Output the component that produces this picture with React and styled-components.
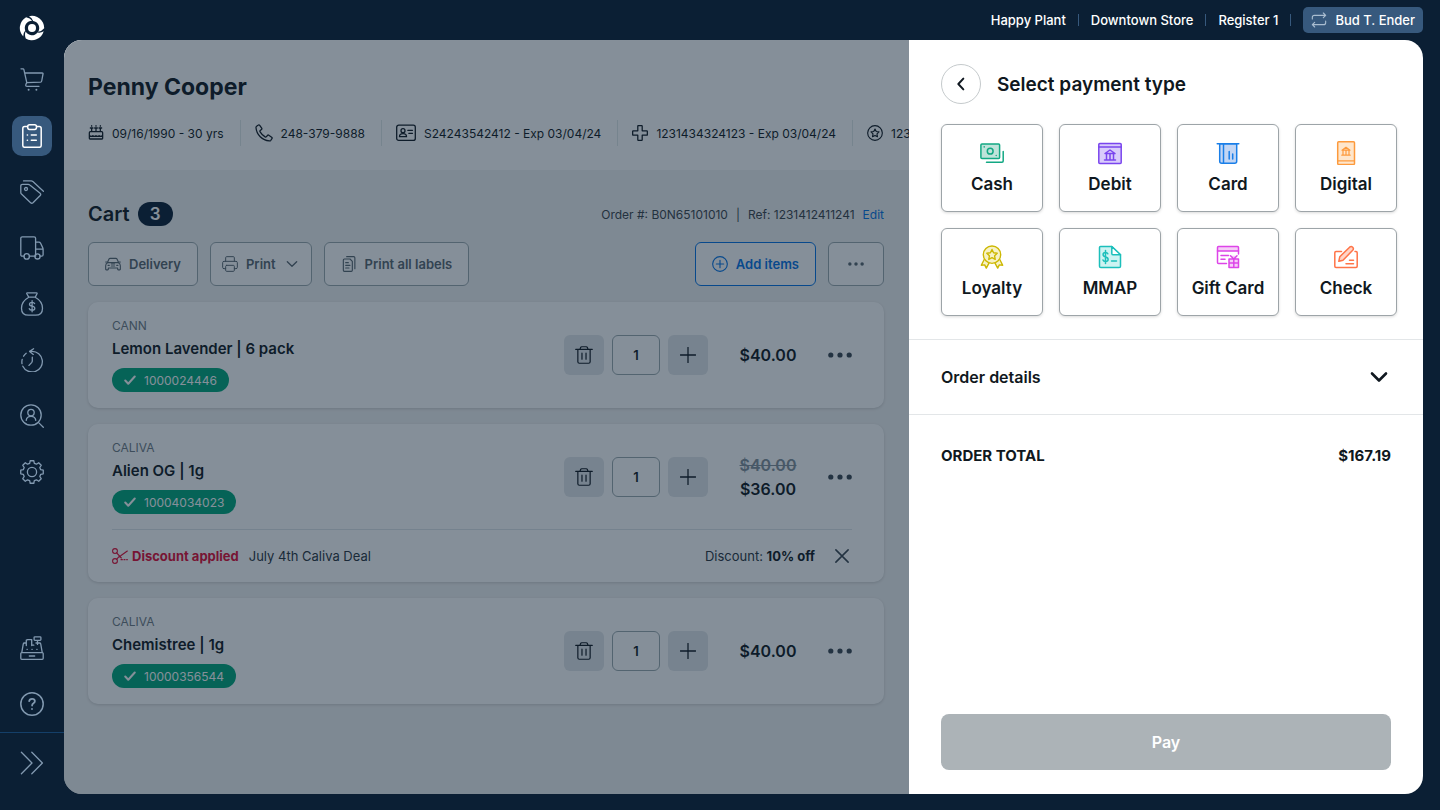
import styled, { createGlobalStyle } from "styled-components";

const GlobalStyle = createGlobalStyle`
  * {
    box-sizing: border-box;
  }
  body {
    margin: 0;
    background: #0b1f34;
    color: #101820;
    font-family: Inter, "Liberation Sans", sans-serif;
    font-size: 13px;
  }
  button, input {
    font: inherit;
    color: inherit;
    margin: 0;
  }
  button {
    cursor: pointer;
  }
  h1, h2, h3, p, ul {
    margin: 0;
    padding: 0;
  }
`;

function Icon({ size = 24, width = 1.3, children }) {
  return (
    <svg
      width={size}
      height={size}
      viewBox="0 0 24 24"
      fill="none"
      stroke="currentColor"
      strokeWidth={width}
      strokeLinecap="round"
      strokeLinejoin="round"
      aria-hidden="true"
    >
      {children}
    </svg>
  );
}

// sidebar icons

const blade = "M-3 -11.8A12.2 12.2 0 0 1 12.2 .2Q9.6 3.4 6.2 3.7A7.2 7.2 0 0 0 1.2 -7.1Q0 -10.3 -3 -11.8Z";

const Logo = () => (
  <svg width="26" height="26" viewBox="-13 -13 26 26" fill="#fff" aria-hidden="true">
    <path d={blade} />
    <path d={blade} transform="rotate(120)" />
    <path d={blade} transform="rotate(240)" />
    <circle r="4" />
  </svg>
);

const CartIcon = () => (
  <Icon>
    <path d="M1 .8h2q.7 0 .9.8l2.9 13M4.5 5h17.7q1 0 .8 1l-1.3 7q-.2 1-1.2 1.1L6.8 14.6l-.9 1.8q-.7 1.9 1.3 1.9H19" />
    <circle cx="8.6" cy="21.8" r="1" fill="currentColor" stroke="none" />
    <circle cx="16.4" cy="21.8" r="1" fill="currentColor" stroke="none" />
  </Icon>
);

const ClipboardIcon = () => (
  <Icon width={1.5}>
    <path d="M7.5 2.6H4.7q-1.9 0-1.9 1.9v17q0 1.8 1.9 1.8h14.6q1.9 0 1.9-1.8v-17q0-1.9-1.9-1.9h-2.8" />
    <rect x="7.7" y=".8" width="8.8" height="4.6" rx="1.8" />
    <path d="M7.3 11h.2M11.3 11h5M7.3 16.3h.2M11.3 16.3h5" />
  </Icon>
);

const TagsIcon = () => (
  <Icon>
    <path d="M.8 6q0-1.7 1.7-1.7h5.7q.9 0 1.6.6l10.3 8.3q1.2 1.1.1 2.3l-7.2 7.2q-1.2 1.1-2.4 0L1.5 14Q.8 13.4.8 12.4z" />
    <path d="M3.5.9h7.7q1 0 1.7.7L23.4 11.2" />
    <circle cx="6" cy="9" r="1.5" />
  </Icon>
);

const TruckIcon = () => (
  <Icon>
    <path d="M4 20.2H2.3Q.8 20.2.8 18.7V2.2Q.8.8 2.3.8h11.8q1.5 0 1.5 1.4v18H9.4M15.6 6.2h3.2q1.3 0 1.8 1.1l2.2 4.6q.3.7.3 1.5v5.3q0 1.5-1.5 1.5H20M15.6 13.2H23" />
    <circle cx="6.7" cy="20.4" r="2.7" />
    <circle cx="17.5" cy="20.4" r="2.6" />
  </Icon>
);

const MoneyBagIcon = () => (
  <Icon>
    <path d="M7.3.8h9.2q.9 0 .5.9L15.4 4.9M7.3.8q-.9 0-.5.9L8.6 4.9M8.4 5.2h7.2M8.8 5.3C4.5 7.7 1.5 12.2 1.5 16.2C1.5 20.8 4.5 23.2 8.5 23.2h7C19.5 23.2 22.5 20.8 22.5 16.2C22.5 12.2 19.5 7.7 15.2 5.3" />
    <path d="M14.6 11.6q-.5-1.3-2.5-1.3q-2.6 0-2.6 1.9q0 1.5 2.6 1.9t2.7 2.1q0 2-2.7 2q-2.3 0-2.8-1.5M12.1 8.6v11.2" />
  </Icon>
);

const HistoryIcon = () => (
  <Icon>
    <path d="M9.6 3.4h2.4a10.3 10.3 0 1 1-9.2 14.8M2 15.6a10.3 10.3 0 0 1 .2-4.3M3.6 8.2a10.3 10.3 0 0 1 2.6-2.9M13.6.8 9.6 3.4l3.7 3M12.3 9.2v3.6q0 1-.7 1.8L9 17.4" />
  </Icon>
);

const CustomerIcon = () => (
  <Icon>
    <circle cx="11" cy="11" r="10.2" />
    <path d="m18.6 18.6 4.7 4.7M6.2 16.3q.5-4 4.8-4t4.8 4" />
    <circle cx="11" cy="8.6" r="3.2" />
  </Icon>
);

// eight teeth, four points each
const gearPoints = Array.from({ length: 32 }, (_, i) => {
  const tooth = Math.floor(i / 4) * 45;
  const angle = ((tooth + [-15, -9, 9, 15][i % 4]) * Math.PI) / 180;
  const radius = i % 4 === 1 || i % 4 === 2 ? 11.4 : 9;
  return `${12 + radius * Math.sin(angle)},${12 - radius * Math.cos(angle)}`;
}).join(" ");

const GearIcon = () => (
  <Icon>
    <polygon points={gearPoints} />
    <circle cx="12" cy="12" r="4.6" />
  </Icon>
);

const RegisterIcon = () => (
  <Icon>
    <rect x=".8" y="16.6" width="22.4" height="6.7" rx="1" />
    <path d="M9.3 20h5.4M1.8 16.4 3.3 7.8Q3.5 7 4.3 7h2M11.8 9.2h2M16 7h3.7q.8 0 1 .8l1.5 8.6M6.3 9.6V4.2l1.4-.6 4 0v6M17.5 4.4v4M14.9.8h5.2q.8 0 .8.8v2q0 .8-.8.8h-5.2q-.8 0-.8-.8v-2q0-.8.8-.8zM7 13.3h.3M11.9 13.3h.3M16.8 13.3h.3" />
  </Icon>
);

const HelpIcon = () => (
  <Icon width={1.5}>
    <circle cx="12" cy="12" r="11.2" />
    <path strokeWidth="1.8" d="M9.2 9.2q.3-2.3 2.9-2.3t2.8 2.2q0 1.4-1.4 2.2t-1.4 2.3M12 16.9v.1" />
  </Icon>
);

const ExpandIcon = () => (
  <Icon>
    <path d="M1.4 1.3 12 12 1.4 22.7M11.8 1.3 22.4 12 11.8 22.7" />
  </Icon>
);

// customer details

const CakeIcon = () => (
  <Icon size={16} width={1.9}>
    <path d="M2 20V11.5q0-1.5 1.5-1.5h17q1.5 0 1.5 1.5V20q0 1-1 1H3q-1 0-1-1zM2.5 16q2.4 2 4.8 0 2.4 2 4.7 0 2.4 2 4.7 0 2.4 2 4.8 0M5.5 10V4.5M12 10V4.5M18.5 10V4.5M5.5 1v.8M12 1v.8M18.5 1v.8M3.5 4.5h4M10 4.5h4M16.5 4.5h4" />
  </Icon>
);

const PhoneIcon = () => (
  <Icon size={18} width={1.7}>
    <path d="M2.2 2.9 4.5 1.4q1-.7 1.8.4l2.6 3.8q.7 1-.3 1.8L7 8.8q-.8.7-.2 1.6 2.4 4 6.7 6.8 1 .6 1.7-.3l1.4-1.6q.8-1 1.8-.3l3.8 2.6q1.1.8.4 1.8l-1.5 2.3q-.7 1-2 .9C9.8 22 2 14.5 1.3 4.7q0-1.2.9-1.8z" />
  </Icon>
);

const IdIcon = () => (
  <svg width="20" height="18" viewBox="0 0 20 18" fill="none" stroke="currentColor" strokeWidth="1.3" strokeLinecap="round" aria-hidden="true">
    <rect x=".7" y="1.2" width="18.6" height="15.2" rx="2" />
    <circle cx="7" cy="6.7" r="2" />
    <path d="M3.5 12.7q0-3 3.5-3t3.5 3zM11.8 6.3h4.7M12.8 9.3h3.7" />
  </svg>
);

const CrossIcon = () => (
  <Icon size={16} width={1.9}>
    <path d="M9.5 1h5q.8 0 .8.8v6.9h6.9q.8 0 .8.8v5q0 .8-.8.8h-6.9v6.9q0 .8-.8.8h-5q-.8 0-.8-.8v-6.9H1.8q-.8 0-.8-.8v-5q0-.8.8-.8h6.9V1.8q0-.8.8-.8z" />
  </Icon>
);

const StarBadgeIcon = () => (
  <Icon size={16} width={1.7}>
    <circle cx="12" cy="12" r="11" />
    <path d="m12 6 1.9 3.8 4.1.6-3 3 .7 4.2-3.7-2-3.7 2 .7-4.2-3-3 4.1-.6z" />
  </Icon>
);

// cart icons

const CarIcon = () => (
  <Icon size={16} width={1.7}>
    <path d="M3.5 10 6 4.5Q6.5 3.5 7.7 3.5h8.6q1.2 0 1.7 1L20.5 10M1 9h2M21 9h2M4 10h16q3 1 3 4.5V20q0 .8-.8.8h-2.4q-.8 0-.8-.8v-2H5v2q0 .8-.8.8H1.8Q1 20.8 1 20v-5.5Q1 11 4 10zM4.5 14h2M17.5 14h2M9.5 15h5M9.5 12h5" />
  </Icon>
);

const PrinterIcon = () => (
  <Icon size={16} width={1.5}>
    <path d="M5.5 8V2.5Q5.5 1 7 1h10q1.5 0 1.5 1.5V8M5.5 19H3q-2 0-2-2v-7q0-2 2-2h18q2 0 2 2v7q0 2-2 2h-2.5M7 14h10q1.5 0 1.5 1.5v6q0 1.5-1.5 1.5H7q-1.5 0-1.5-1.5v-6Q5.5 14 7 14z" />
  </Icon>
);

const PagesIcon = () => (
  <Icon size={16} width={1.7}>
    <path d="M5 4.5h8.5l3.5 3.5v13.5q0 1.5-1.5 1.5H5q-1.5 0-1.5-1.5V6Q3.5 4.5 5 4.5zM8.5 1H19q1.8 0 1.8 1.8V19M7 10h4M7 14h6.500M7 18h5" />
  </Icon>
);

const AddIcon = () => (
  <Icon size={16} width={1.7}>
    <circle cx="12" cy="12" r="11" />
    <path d="M12 6.5v11M6.5 12h11" />
  </Icon>
);

const ChevronIcon = ({ size, width }) => (
  <Icon size={size} width={width}>
    <path d="m5 8.5 7 7 7-7" />
  </Icon>
);

const DotsIcon = ({ size }) => (
  <Icon size={size}>
    <g fill="currentColor" stroke="none">
      <circle cx="2.8" cy="12" r="2.6" />
      <circle cx="12" cy="12" r="2.6" />
      <circle cx="21.2" cy="12" r="2.6" />
    </g>
  </Icon>
);

const TrashIcon = () => (
  <Icon size={18} width={1.6}>
    <path d="M1 4.5h22M6.5 4.5l1-2.5q.4-1 1.5-1h6q1.1 0 1.5 1l1 2.5M3.8 5v16q0 2 2 2h12.4q2 0 2-2V5M9.3 9.5v8M14.7 9.5v8" />
  </Icon>
);

const PlusIcon = () => (
  <Icon size={16} width={1.9}>
    <path d="M12 .5v23M.5 12h23" />
  </Icon>
);

const CloseIcon = () => (
  <Icon size={14} width={2.6}>
    <path d="m1.5 1.5 21 21M22.5 1.5l-21 21" />
  </Icon>
);

const CheckMark = () => (
  <Icon size={12} width={4}>
    <path d="m2.5 13 6 6.5L21.5 5" />
  </Icon>
);

const ScissorsIcon = () => (
  <Icon size={16} width={1.7}>
    <circle cx="4.5" cy="4.5" r="3.6" />
    <circle cx="4.5" cy="19.5" r="3.6" />
    <path d="M7 7.2 14 15M7 16.8Q10 12.5 13 11.5L23 4.5M13.5 17.5h2M18 17.5h1.5M22 17.5h1" />
  </Icon>
);

const SwapIcon = () => (
  <Icon size={16} width={1.7}>
    <path d="M2 10.5V8q0-3 3-3h17M18.5 1.5 22 5l-3.5 3.5M22 13.5V16q0 3-3 3H2M5.5 15.5 2 19l3.5 3.5" />
  </Icon>
);

// payment type icons, "fill" is the pale tint of each one

const CashArt = ({ fill }) => (
  <Icon width={1.5}>
    <rect x=".9" y="2.9" width="18.7" height="14.7" rx="1" fill={fill} />
    <circle cx="10.2" cy="10.2" r="2.9" />
    <path d="M4.2 5.8v.1M16.2 14.5v.1M23.2 10.5V20q0 1.2-1.2 1.2H6.5" />
  </Icon>
);

const DebitArt = ({ fill }) => (
  <Icon width={1.5}>
    <rect x=".8" y="2.5" width="22.4" height="20" rx="1" fill={fill} />
    <path d="M.8 6h22.4M7 12.5l5-3.5 5 3.5zM8.5 13v5.5M12 13v5.5M15.5 13v5.5M6.5 19h11" />
  </Icon>
);

const CardArt = ({ fill }) => (
  <Icon width={1.5}>
    <path d="M3.7 2.7v17.5q0 2 2 2h13q2 0 2-2V2.7z" fill={fill} />
    <path d="M1.2 2.7h21.6M7.5 3v19M13.2 10.5V18M16.7 13V18" />
  </Icon>
);

const DigitalArt = ({ fill }) => (
  <Icon width={1.5}>
    <rect x="3.7" y=".8" width="16.8" height="22.6" rx="1" fill={fill} />
    <path strokeWidth="1.2" d="M3.7 19.8h16.8M8 9.2l4-2.9 4 2.9zM9 9.5v4.5M12 9.5v4.5M15 9.5v4.5M7.8 14.2h8.4" />
  </Icon>
);

const LoyaltyArt = ({ fill }) => (
  <Icon width={1.4}>
    <path d="M4.2 14.5 1.3 20.2l3.4-.3 1.6 3.2 3.2-6M19.8 14.5l2.9 5.7-3.4-.3-1.6 3.2-3.2-6" fill={fill} />
    <circle cx="12" cy="9.7" r="8.7" fill={fill} />
    <path d="m12 4.5 1.6 3.3 3.6.5-2.6 2.5.6 3.6-3.2-1.7-3.2 1.7.6-3.6-2.6-2.5 3.6-.5z" />
  </Icon>
);

const MmapArt = ({ fill }) => (
  <Icon width={1.5}>
    <path d="M2.5 1.5h11.3l8.7 8.3v11.4q0 1.3-1.3 1.3H2.8q-1.3 0-1.3-1.3V2.5q0-1 1-1z" fill={fill} />
    <path d="M13.8 1.5v7q0 1.3 1.3 1.3h7.4z" fill="#fff" />
    <path d="M9.8 8.8q-.5-1.3-2.3-1.3-2.4 0-2.4 2t2.5 2.4q2.5.5 2.5 2.5t-2.6 2q-2 0-2.5-1.5M7.5 5.5v13M13.5 16h5" />
  </Icon>
);

const GiftArt = ({ fill }) => (
  <Icon width={1.5}>
    <path d="M1.5 6V2.5q0-1 1-1h19q1 0 1 1V6z" fill={fill} />
    <path d="M1.5 6v11.5q0 1 1 1h8M22.5 6v3M5 10.5h7.5M5 14.2h4" />
    <path d="M13 14h9.5v8.5H13zM17.8 14v8.5M13 18h9.5M14.5 10.8l3.3 3.2 3.2-3.2" fill={fill} />
  </Icon>
);

const CheckArt = ({ fill }) => (
  <Icon width={1.5}>
    <path d="M7.5 6.5H2q-1.2 0-1.2 1.2v13.5q0 1.2 1.2 1.2h20q1.2 0 1.2-1.2V7.7q0-1.2-1.2-1.2h-1M15.5 15.3h4M12 18.8h7.5" />
    <path d="M4.8 16.3l1-4.6L15.6 2.2q1.6-1.3 3.1 0 1.4 1.5 0 3.1L9 15.2z" fill={fill} />
  </Icon>
);

// data

const NAV = [
  { label: "Sales", icon: CartIcon },
  { label: "Orders", icon: ClipboardIcon, active: true },
  { label: "Products", icon: TagsIcon },
  { label: "Deliveries", icon: TruckIcon },
  { label: "Cash", icon: MoneyBagIcon },
  { label: "History", icon: HistoryIcon },
  { label: "Customers", icon: CustomerIcon },
  { label: "Settings", icon: GearIcon },
];

const DETAILS = [
  { icon: CakeIcon, text: "09/16/1990 - 30 yrs" },
  { icon: PhoneIcon, text: "248-379-9888" },
  { icon: IdIcon, text: "S24243542412 - Exp 03/04/24" },
  { icon: CrossIcon, text: "1231434324123 - Exp 03/04/24" },
  { icon: StarBadgeIcon, text: "123" },
];

const ITEMS = [
  { brand: "CANN", name: "Lemon Lavender | 6 pack", code: "1000024446", price: "$40.00" },
  {
    brand: "CALIVA",
    name: "Alien OG | 1g",
    code: "10004034023",
    was: "$40.00",
    price: "$36.00",
    discount: { name: "July 4th Caliva Deal", amount: "10% off" },
  },
  { brand: "CALIVA", name: "Chemistree | 1g", code: "10000356544", price: "$40.00" },
];

const PAYMENTS = [
  { label: "Cash", icon: CashArt, color: "#12a883", fill: "#bfe3da" },
  { label: "Debit", icon: DebitArt, color: "#7a45ee", fill: "#d9ccfb" },
  { label: "Card", icon: CardArt, color: "#1a7fe8", fill: "#c3d6f4" },
  { label: "Digital", icon: DigitalArt, color: "#fd9a3c", fill: "#fee6cc" },
  { label: "Loyalty", icon: LoyaltyArt, color: "#cdb803", fill: "#f7f2c6" },
  { label: "MMAP", icon: MmapArt, color: "#1cbfbb", fill: "#cdf3f2" },
  { label: "Gift Card", icon: GiftArt, color: "#dd45e8", fill: "#f6cdf8" },
  { label: "Check", icon: CheckArt, color: "#ff7448", fill: "#ffd5c8" },
];

function CartItem({ item }) {
  return (
    <Card>
      <ItemRow>
        <ItemInfo>
          <Brand>{item.brand}</Brand>
          <ItemName>{item.name}</ItemName>
          <Pill>
            <CheckMark />
            {item.code}
          </Pill>
        </ItemInfo>
        <Quantity>
          <SquareButton aria-label={`Remove ${item.name}`}>
            <TrashIcon />
          </SquareButton>
          <QuantityInput defaultValue="1" aria-label={`Quantity of ${item.name}`} />
          <SquareButton aria-label={`Add one ${item.name}`}>
            <PlusIcon />
          </SquareButton>
        </Quantity>
        <Price>
          {item.was && <s>{item.was}</s>}
          <span>{item.price}</span>
        </Price>
        <PlainButton aria-label={`More for ${item.name}`}>
          <DotsIcon size={24} />
        </PlainButton>
      </ItemRow>
      {item.discount && (
        <Discount>
          <ScissorsIcon />
          <strong>Discount applied</strong>
          <DealName>{item.discount.name}</DealName>
          <DealAmount>
            Discount: <b>{item.discount.amount}</b>
          </DealAmount>
          <CloseButton aria-label="Remove discount">
            <CloseIcon />
          </CloseButton>
        </Discount>
      )}
    </Card>
  );
}

function App() {
  return (
    <Page>
      <GlobalStyle />
      <Sidebar>
        <LogoBox>
          <Logo />
        </LogoBox>
        {NAV.map(({ label, icon: Glyph, active }) => (
          <NavButton key={label} $active={active} aria-label={label}>
            <Glyph />
          </NavButton>
        ))}
        <SidebarEnd>
          <NavButton aria-label="Cash register">
            <RegisterIcon />
          </NavButton>
          <NavButton aria-label="Help">
            <HelpIcon />
          </NavButton>
        </SidebarEnd>
        <ExpandArea>
          <NavButton aria-label="Expand menu">
            <ExpandIcon />
          </NavButton>
        </ExpandArea>
      </Sidebar>

      <Workspace>
        <TopBar>
          <TopItem>Happy Plant</TopItem>
          <TopItem>Downtown Store</TopItem>
          <TopItem>Register 1</TopItem>
          <UserButton>
            <SwapIcon />
            Bud T. Ender
          </UserButton>
        </TopBar>

        <Shell>
          <Main>
            <CustomerHeader>
              <CustomerName>Penny Cooper</CustomerName>
              <DetailList>
                {DETAILS.map(({ icon: Glyph, text }) => (
                  <Detail key={text}>
                    <Glyph />
                    {text}
                  </Detail>
                ))}
              </DetailList>
            </CustomerHeader>

            <CartSection>
              <CartHead>
                <CartTitle>Cart</CartTitle>
                <CountBadge>3</CountBadge>
                <OrderInfo>
                  <span>Order #: B0N65101010</span>
                  <span>|</span>
                  <span>Ref: 1231412411241</span>
                  <EditLink href="#edit">Edit</EditLink>
                </OrderInfo>
              </CartHead>
              <Toolbar>
                <ToolButton>
                  <CarIcon />
                  Delivery
                </ToolButton>
                <ToolButton $tight>
                  <PrinterIcon />
                  Print
                  <ChevronIcon size={16} width={2} />
                </ToolButton>
                <ToolButton>
                  <PagesIcon />
                  Print all labels
                </ToolButton>
                <ToolbarEnd>
                  <ToolButton $primary>
                    <AddIcon />
                    Add items
                  </ToolButton>
                  <ToolButton $wide aria-label="More actions">
                    <DotsIcon size={16} />
                  </ToolButton>
                </ToolbarEnd>
              </Toolbar>
              <ItemList>
                {ITEMS.map((item) => (
                  <CartItem key={item.code} item={item} />
                ))}
              </ItemList>
            </CartSection>
            <Dimmer />
          </Main>

          <Panel>
            <PanelHead>
              <BackButton aria-label="Back">
                <Icon size={16} width={3}>
                  <path d="m15.5 4-7.5 8 7.5 8" />
                </Icon>
              </BackButton>
              <PanelTitle>Select payment type</PanelTitle>
            </PanelHead>
            <PaymentGrid>
              {PAYMENTS.map(({ label, icon: Art, color, fill }) => (
                <PaymentButton key={label} $color={color}>
                  <Art fill={fill} />
                  <span>{label}</span>
                </PaymentButton>
              ))}
            </PaymentGrid>
            <DetailsToggle aria-expanded="false">
              Order details
              <ChevronIcon size={24} width={2.6} />
            </DetailsToggle>
            <Total>
              <span>ORDER TOTAL</span>
              <span>$167.19</span>
            </Total>
            <PayButton>Pay</PayButton>
          </Panel>
        </Shell>
      </Workspace>
    </Page>
  );
}

export default App;

const Page = styled.div`
  display: flex;
  min-height: 100vh;
`;

const Sidebar = styled.nav`
  flex: 0 0 64px;
  display: flex;
  flex-direction: column;
  align-items: center;
  gap: 16px;
  padding-top: 8px;
`;

const LogoBox = styled.div`
  display: flex;
  align-items: center;
  justify-content: center;
  width: 40px;
  height: 40px;
  margin-bottom: -4px;
`;

const NavButton = styled.button`
  display: flex;
  align-items: center;
  justify-content: center;
  width: 40px;
  height: 40px;
  padding: 0;
  border: none;
  border-radius: 10px;
  background: ${(props) => (props.$active ? "#37597d" : "transparent")};
  color: ${(props) => (props.$active ? "#fff" : "#8299b0")};
`;

const SidebarEnd = styled.div`
  display: flex;
  flex-direction: column;
  gap: 16px;
  margin-top: auto;
  margin-bottom: -8px;
`;

const ExpandArea = styled.div`
  display: flex;
  justify-content: center;
  width: 100%;
  padding: 10px 0 27px;
  border-top: 1px solid #143f69;
`;

const Workspace = styled.div`
  flex: 1;
  min-width: 0;
  display: flex;
  flex-direction: column;
  padding: 0 17px 16px 0;
`;

const TopBar = styled.header`
  display: flex;
  align-items: center;
  justify-content: flex-end;
  height: 40px;
`;

const TopItem = styled.span`
  color: #fff;
  font-weight: 500;
  line-height: 12px;
  padding: 0 12px;
  border-right: 1px solid #37597d;
`;

const UserButton = styled.button`
  display: flex;
  align-items: center;
  gap: 8px;
  height: 26px;
  margin-left: 12px;
  padding: 0 8px;
  border: none;
  border-radius: 5px;
  background: #37597d;
  color: #fff;
  font-weight: 500;
  svg {
    color: #a9bdd0;
  }
`;

const Shell = styled.div`
  flex: 1;
  display: flex;
  border-radius: 18px;
  overflow: hidden;
`;

const Main = styled.main`
  position: relative;
  flex: 1;
  min-width: 0;
  background: #f1f2f2;
`;

const Dimmer = styled.div`
  position: absolute;
  inset: 0;
  background: rgba(11, 31, 52, 0.5);
`;

const CustomerHeader = styled.section`
  padding: 32px 0 24px 24px;
  background: #fff;
  overflow: hidden;
`;

const CustomerName = styled.h1`
  font-size: 23px;
  line-height: 30px;
  font-weight: 700;
`;

const DetailList = styled.ul`
  display: flex;
  margin-top: 18px;
  list-style: none;
`;

const Detail = styled.li`
  display: flex;
  align-items: center;
  gap: 8px;
  flex: none;
  height: 26px;
  padding-right: 16px;
  margin-right: 14px;
  border-right: 1px solid #e0e8e8;
  font-size: 12px;
  white-space: nowrap;
`;

const CartSection = styled.section`
  padding: 28px 25px 28px 24px;
`;

const CartHead = styled.div`
  display: flex;
  align-items: center;
  height: 32px;
`;

const CartTitle = styled.h2`
  font-size: 20px;
  font-weight: 600;
`;

const CountBadge = styled.span`
  margin-left: 8px;
  width: 35px;
  border-radius: 12px;
  background: #0b1f34;
  color: #fff;
  font-size: 17px;
  line-height: 24px;
  font-weight: 600;
  text-align: center;
`;

const OrderInfo = styled.div`
  display: flex;
  gap: 8px;
  margin-left: auto;
  color: #3b444b;
  font-size: 12px;
`;

const EditLink = styled.a`
  color: #0573e4;
  text-decoration: none;
`;

const Toolbar = styled.div`
  display: flex;
  gap: 12px;
  margin: 12px 0 16px;
`;

const ToolbarEnd = styled.div`
  display: flex;
  gap: 12px;
  margin-left: auto;
`;

const ToolButton = styled.button`
  display: flex;
  align-items: center;
  justify-content: center;
  gap: 8px;
  height: 44px;
  min-width: ${(props) => (props.$wide ? "56px" : "0")};
  padding: 0 ${(props) => (props.$tight ? "11px" : "16px")};
  border: 1px solid ${(props) => (props.$primary ? "#0573e4" : "#9aa8ac")};
  border-radius: 6px;
  background: #fff;
  color: ${(props) => (props.$primary ? "#0573e4" : "#59666f")};
  font-weight: 600;
`;

const ItemList = styled.div`
  display: flex;
  flex-direction: column;
  gap: 16px;
`;

const Card = styled.article`
  padding: 0 32px 0 24px;
  border-radius: 10px;
  background: #fff;
  box-shadow: 0 1px 3px rgba(0, 0, 0, 0.15);
`;

const ItemRow = styled.div`
  display: flex;
  align-items: center;
  padding: 16px 0;
`;

const ItemInfo = styled.div`
  flex: 1;
`;

const Brand = styled.p`
  color: #6f7b83;
  font-size: 12px;
  line-height: 16px;
`;

const ItemName = styled.h3`
  font-size: 15px;
  line-height: 30px;
  font-weight: 600;
`;

const Pill = styled.div`
  display: flex;
  align-items: center;
  gap: 8px;
  width: max-content;
  height: 24px;
  margin-top: 4px;
  padding: 0 12px;
  border-radius: 12px;
  background: #00a67a;
  color: #fff;
  font-size: 12px;
`;

const Quantity = styled.div`
  display: flex;
  gap: 8px;
`;

const SquareButton = styled.button`
  display: flex;
  align-items: center;
  justify-content: center;
  width: 40px;
  height: 40px;
  padding: 0;
  border: none;
  border-radius: 6px;
  background: #e3e7ea;
`;

const QuantityInput = styled.input`
  width: 48px;
  height: 40px;
  border: 1px solid #9aa8ac;
  border-radius: 6px;
  background: #fff;
  font-weight: 600;
  text-align: center;
`;

const Price = styled.div`
  display: flex;
  flex-direction: column;
  width: 120px;
  font-size: 16px;
  line-height: 24px;
  font-weight: 600;
  text-align: center;
  s {
    color: #83909a;
  }
`;

const PlainButton = styled.button`
  display: flex;
  padding: 0;
  border: none;
  background: none;
  color: #3b4650;
`;

const CloseButton = styled(PlainButton)`
  margin: 0 3px 0 20px;
`;

const Discount = styled.div`
  display: flex;
  align-items: center;
  height: 53px;
  margin-top: -1px;
  border-top: 1px solid #dfe4e8;
  color: #e30b34;
  strong {
    margin-left: 4px;
    font-weight: 700;
  }
`;

const DealName = styled.span`
  margin-left: 10px;
  color: #2a343c;
`;

const DealAmount = styled.span`
  margin-left: auto;
  color: #2a343c;
  b {
    color: #101820;
  }
`;

const Panel = styled.aside`
  flex: 0 0 514px;
  display: flex;
  flex-direction: column;
  padding: 24px 0;
  background: #fff;
`;

const PanelHead = styled.div`
  display: flex;
  align-items: center;
  gap: 16px;
  padding: 0 32px;
`;

const BackButton = styled.button`
  display: flex;
  align-items: center;
  justify-content: center;
  width: 40px;
  height: 40px;
  padding: 0;
  border: 1px solid #c5cacc;
  border-radius: 50%;
  background: #fff;
`;

const PanelTitle = styled.h2`
  font-size: 19px;
  font-weight: 600;
`;

const PaymentGrid = styled.div`
  display: grid;
  grid-template-columns: repeat(4, 1fr);
  gap: 16px;
  padding: 20px 26px 23px 32px;
`;

const PaymentButton = styled.button`
  display: flex;
  flex-direction: column;
  align-items: center;
  gap: 8px;
  height: 88px;
  padding: 16px 0 0;
  border: 1px solid #9da4a8;
  border-radius: 6px;
  background: #fff;
  box-shadow: 0 1px 3px rgba(0, 0, 0, 0.15);
  font-size: 17px;
  line-height: 22px;
  font-weight: 600;
  white-space: nowrap;
  svg {
    color: ${(props) => props.$color};
  }
`;

const DetailsToggle = styled.button`
  display: flex;
  align-items: center;
  justify-content: space-between;
  height: 76px;
  padding: 0 32px;
  border: solid #e3e6e8;
  border-width: 1px 0;
  background: none;
  font-size: 16px;
  font-weight: 600;
`;

const Total = styled.div`
  display: flex;
  justify-content: space-between;
  padding: 28px 32px;
  font-size: 15px;
  line-height: 26px;
  font-weight: 700;
`;

const PayButton = styled.button`
  height: 56px;
  margin: auto 32px 0;
  border: none;
  border-radius: 8px;
  background: #acb3b7;
  color: #fff;
  font-size: 16px;
  font-weight: 600;
`;
